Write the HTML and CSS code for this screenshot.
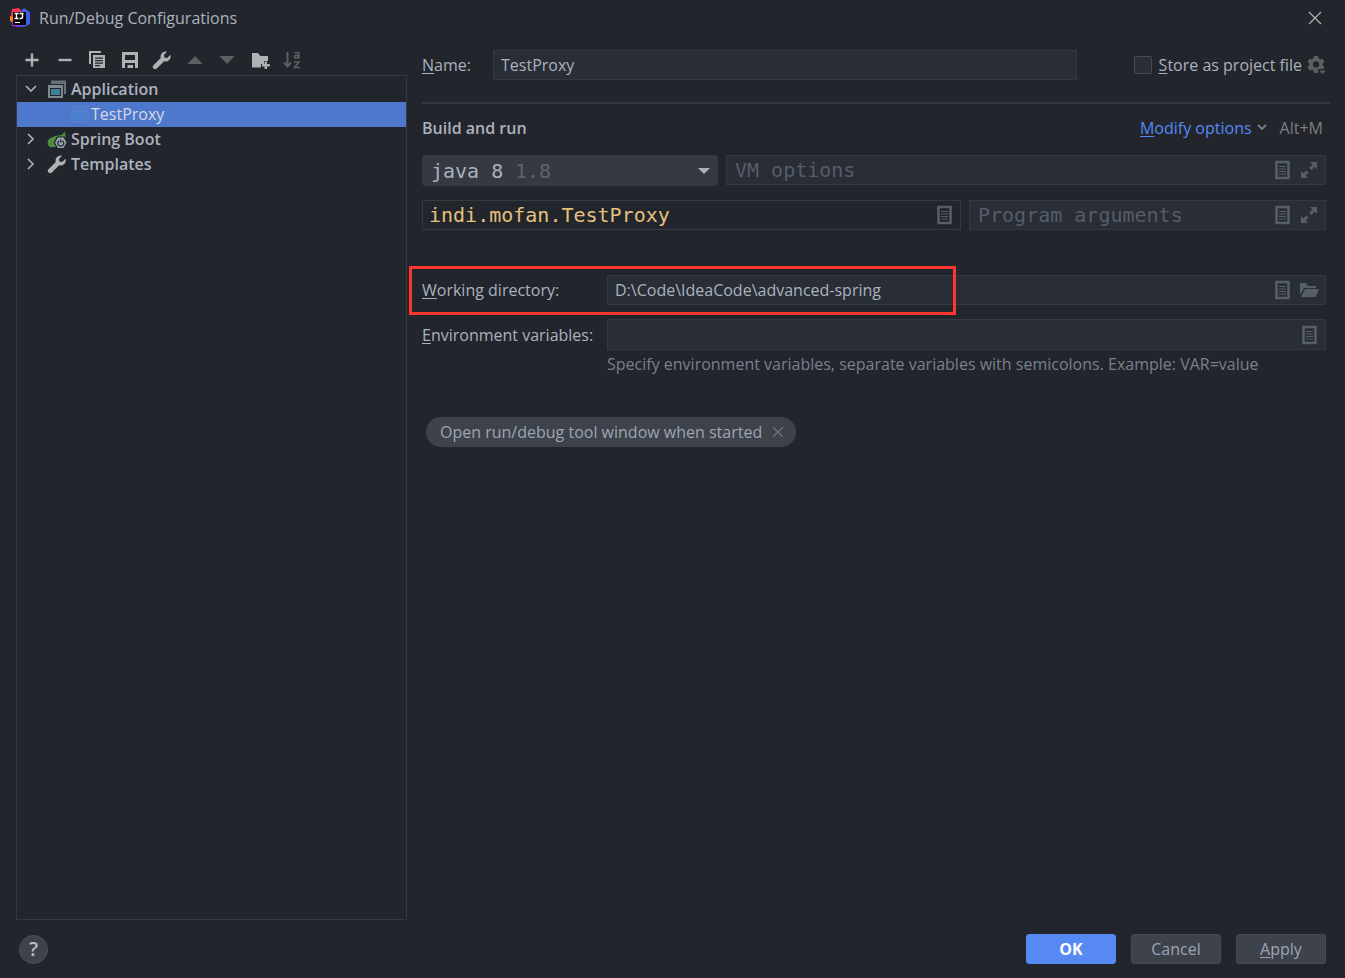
FILE: index.html
```
<!DOCTYPE html>
<html lang="en">
<head>
<meta charset="utf-8">
<title>Run/Debug Configurations</title>
<link rel="stylesheet" href="styles.css">
</head>
<body>
<svg class="defs" aria-hidden="true">
  <symbol id="wrench" viewBox="0 0 20 20"><path d="M18.500 4.800 15.200 8 12.300 7.600 12 5 15 1.700A5.200 5.200 0 0 0 8.700 8L1.500 15.200a2 2 0 0 0 3.300 3.300l7.300-7.200A5.200 5.200 0 0 0 18.500 4.800z" fill="currentColor"/></symbol>
  <symbol id="doc" viewBox="0 0 20 20"><path d="M4.500 2h12v16h-12z" fill="none" stroke="currentColor" stroke-width="2.600"/><path d="M7 6.500h7M7 9h7M7 11.500h7M7 14h7" stroke="currentColor" stroke-width="1.200"/></symbol>
  <symbol id="expand" viewBox="0 0 20 20"><path d="M11 2h7v7l-2.300-2.300-3.200 3.200-2.200-2.200L13.400 4.400zM2 11v7h7l-2.400-2.400 3-3-2.200-2.200-3.100 3z" fill="currentColor"/></symbol>
  <symbol id="app" viewBox="0 0 20 20"><path d="M4 1.500h15V15h-2V5H4z" fill="currentColor" opacity=".75"/><path d="M1 6h15v13H1zM3 9v8h11V9z" fill="currentColor" fill-rule="evenodd"/><path d="M4 10h9v6H4z"/></symbol>
  <symbol id="chevron" viewBox="0 0 12 12"><path d="M3 1 8 6 3 11" fill="none" stroke="currentColor" stroke-width="1.600"/></symbol>
</svg>

<div class="dialog">
  <header class="titlebar">
    <svg class="logo" viewBox="0 0 20 20" aria-hidden="true">
      <path d="M2 1 9 0l3 4-4 9H0z" fill="#fe315d"/>
      <path d="M0 8l4 1 1 7-5-3z" fill="#fc801d"/>
      <path d="M2 13h7l5 5-4 1-8-1z" fill="#a22ee0"/>
      <path d="M11 3 14 0l6 4v12l-6 3-6-2z" fill="#3b62e8"/>
      <path d="M3 4h13v13H3z" fill="#050505"/>
      <path d="M4.500 5.500h4M6.500 5.500v5M4.500 10.500h4M9.500 5.500h4M12.500 5.500v3.500q0 1.500-2 1.500H9.500" fill="none" stroke="#fff" stroke-width="1.400"/>
      <path d="M5 14.500h5" stroke="#fff" stroke-width="1"/>
    </svg>
    <h1 class="title">Run/Debug Configurations</h1>
    <button class="icon-btn close" aria-label="Close"><svg viewBox="0 0 20 20"><path d="M4 4l12 12M16 4 4 16" stroke="currentColor" stroke-width="1.200"/></svg></button>
  </header>

  <main class="content">
    <aside class="sidebar">
      <div class="toolbar">
        <button class="icon-btn" aria-label="Add"><svg viewBox="0 0 20 20"><path d="M10 3.500v13M3.500 10h13" stroke="currentColor" stroke-width="2.400"/></svg></button>
        <button class="icon-btn" aria-label="Remove"><svg viewBox="0 0 20 20"><path d="M3.500 10h13" stroke="currentColor" stroke-width="2.400"/></svg></button>
        <button class="icon-btn" aria-label="Copy"><svg viewBox="0 0 20 20"><path d="M2 14V1h12v2H4v11z" fill="currentColor"/><path d="M6 5h12v13H6zM8 7.500v1.200h8V7.500zM8 10v1.200h8V10zM8 12.500v1.200h8v-1.200zM8 15v1.200h5V15z" fill="currentColor" fill-rule="evenodd"/></svg></button>
        <button class="icon-btn" aria-label="Save"><svg viewBox="0 0 20 20"><path d="M2 2h16v16H2zM5 5v5h10V5zM5 13v5h10v-5z" fill="currentColor" fill-rule="evenodd"/><path d="M7.500 15H13v3H7.500z" fill="currentColor"/></svg></button>
        <button class="icon-btn" aria-label="Edit templates"><svg><use href="#wrench"/></svg></button>
        <button class="icon-btn off" aria-label="Move up" disabled><svg viewBox="0 0 20 20"><path d="M10 6l7.500 8h-15z" fill="currentColor"/></svg></button>
        <button class="icon-btn off" aria-label="Move down" disabled><svg viewBox="0 0 20 20"><path d="M10 14 2.500 6h15z" fill="currentColor"/></svg></button>
        <button class="icon-btn" aria-label="New folder"><svg viewBox="0 0 20 20"><path d="M2 3h6l2.500 3H18v5h-4v3h-3v3.500H2z" fill="currentColor"/><path d="M15.800 11.500v7.500M12 15.200h7.800" stroke="currentColor" stroke-width="2.400"/></svg></button>
        <button class="icon-btn off" aria-label="Sort alphabetically" disabled><svg viewBox="0 0 20 20"><path d="M5.500 2v14M2 12.500l3.500 4 3.500-4" fill="none" stroke="currentColor" stroke-width="2"/><path d="M12.500 3q5-1.500 4.500 1.500v4M17 5.500q-4.500-.5-4.500 1.200 0 1.800 2.500 1.300l2-1M12 12h5l-4.500 5.500H18" fill="none" stroke="currentColor" stroke-width="1.600"/></svg></button>
      </div>
      <ul class="tree" role="tree">
        <li class="node" role="treeitem"><svg class="arrow open"><use href="#chevron"/></svg><svg class="node-icon app"><use href="#app"/></svg>Application</li>
        <li class="node child" role="treeitem" aria-selected="true"><svg class="node-icon app faded"><use href="#app"/></svg>TestProxy</li>
        <li class="node" role="treeitem"><svg class="arrow"><use href="#chevron"/></svg><svg class="node-icon" viewBox="0 0 20 20"><path d="M1 16C-1 9 7 7 12 6.500q4-.5 5.500-4Q20 8 17 12.500 12 19 3 18z" fill="#4f8f3c"/><path d="M10 7.500h7.500l3 6-3.500 6h-7l-3.500-6z" fill="#22252c"/><path d="M11 8.500h5.500l3 5-3 5.500H11l-3-5.500z" fill="#9aa7b0"/><path d="M12 11.700a3 3 0 1 0 3.600 0M13.800 10.300v3.400" fill="none" stroke="#22252c" stroke-width="1.300"/></svg>Spring Boot</li>
        <li class="node" role="treeitem"><svg class="arrow"><use href="#chevron"/></svg><svg class="node-icon"><use href="#wrench"/></svg>Templates</li>
      </ul>
    </aside>

    <form class="form">
      <div class="name-row">
        <label class="name-label" for="name"><u>N</u>ame:</label>
        <div class="field name-field"><input id="name" value="TestProxy"></div>
        <div class="store">
          <input type="checkbox" id="store" class="check"><label for="store"><u>S</u>tore as project file</label>
          <button type="button" class="icon-btn dim" aria-label="Storage options"><svg viewBox="0 0 20 20"><path d="M8 1h4l.6 2.300 1.500.9 2.300-.7 2 3.300-1.700 1.700v1.800l1.700 1.700-2 3.400-2.300-.7-1.500.8L12 18H8l-.6-2.500-1.500-.8-2.300.7-2-3.400 1.700-1.700V8.500L1.600 6.800l2-3.300 2.300.7 1.500-.9zM10 6.300a3.100 3.100 0 1 0 0 6.200 3.100 3.100 0 0 0 0-6.200z" fill="currentColor" fill-rule="evenodd"/><path d="M12 14h8v2l-4 4-4-4z" fill="#22252c"/><path d="M13 15.500h7L16.500 19z" fill="currentColor"/></svg></button>
        </div>
      </div>
      <hr class="rule">
      <div class="section-head">
        <h2 class="section-title">Build and run</h2>
        <button type="button" class="modify"><span class="link"><u>M</u>odify options</span><svg class="mini" viewBox="0 0 12 12"><path d="M2 3l4 4 4-4" fill="none" stroke="currentColor" stroke-width="1.800"/></svg></button>
        <span class="shortcut">Alt+M</span>
      </div>
      <div class="row first">
        <div class="combo">
          <select aria-label="Java runtime"><option>java 8</option></select>
          <span class="version">1.8</span>
          <svg class="caret" viewBox="0 0 12 6"><path d="M0 0h12L6 6z" fill="currentColor"/></svg>
        </div>
        <div class="field mono grow">
          <input aria-label="VM options" placeholder="VM options">
          <button type="button" class="icon-btn" aria-label="Insert macro"><svg><use href="#doc"/></svg></button>
          <button type="button" class="icon-btn" aria-label="Expand"><svg><use href="#expand"/></svg></button>
        </div>
      </div>
      <div class="row">
        <div class="field mono main-class">
          <input aria-label="Main class" value="indi.mofan.TestProxy">
          <button type="button" class="icon-btn" aria-label="Insert macro"><svg><use href="#doc"/></svg></button>
        </div>
        <div class="field mono program-args">
          <input aria-label="Program arguments" placeholder="Program arguments">
          <button type="button" class="icon-btn" aria-label="Insert macro"><svg><use href="#doc"/></svg></button>
          <button type="button" class="icon-btn" aria-label="Expand"><svg><use href="#expand"/></svg></button>
        </div>
      </div>
      <div class="row labelled workdir">
        <label for="dir"><u>W</u>orking directory:</label>
        <div class="field grow">
          <input id="dir" value="D:\Code\IdeaCode\advanced-spring">
          <button type="button" class="icon-btn" aria-label="Insert macro"><svg><use href="#doc"/></svg></button>
          <button type="button" class="icon-btn" aria-label="Browse"><svg viewBox="0 0 20 20"><path d="M1 3h6l2 3h8v2H5L1 15z" fill="currentColor"/><path d="M6 9h14l-3.500 8H2z" fill="currentColor"/></svg></button>
        </div>
        <span class="highlight"></span>
      </div>
      <div class="row labelled">
        <label for="env"><u>E</u>nvironment variables:</label>
        <div class="field grow env-field">
          <input id="env">
          <button type="button" class="icon-btn" aria-label="Edit variables"><svg><use href="#doc"/></svg></button>
        </div>
      </div>
      <p class="hint">Specify environment variables, separate variables with semicolons. Example: VAR=value</p>
      <div class="chip">Open run/debug tool window when started
        <button type="button" class="chip-close" aria-label="Remove option"><svg viewBox="0 0 10 10"><path d="M0 0l10 10M10 0 0 10" stroke="currentColor" stroke-width="1.400"/></svg></button>
      </div>
    </form>
  </main>

  <footer class="footer">
    <button class="help" aria-label="Help">?</button>
    <button class="btn primary">OK</button>
    <button class="btn">Cancel</button>
    <button class="btn"><u>A</u>pply</button>
  </footer>
</div>
</body>
</html>
```
FILE: styles.css
```
:root {
  --bg: #22252c;
  --field: #292d35;
  --line: #343840;
  --text: #abb2bf;
  --muted: #7a808c;
  --icon: #afb1b3;
}
* { box-sizing: border-box; }
body {
  margin: 0;
  background: var(--bg);
  color: var(--text);
  font: 16px/20px "Open Sans", "Noto Sans", sans-serif;
}
button, input, select { font: inherit; color: inherit; }
u { text-underline-offset: 2px; }
.defs { display: none; }
.dialog { display: flex; flex-direction: column; min-height: 100vh; }

.titlebar { display: flex; align-items: center; gap: 9px; height: 36px; padding: 0 20px 0 10px; }
.logo { width: 20px; height: 20px; }
.title { flex: 1; margin: 0; font-size: 16px; font-weight: 400; }
.icon-btn {
  display: flex; flex: none; align-items: center; justify-content: center;
  width: 20px; height: 20px; padding: 0; border: 0; background: none; color: var(--icon);
}
.icon-btn svg { width: 20px; height: 20px; }
.icon-btn.off, .icon-btn.dim { color: #5c5e60; }

.content { display: flex; flex: 1; gap: 15px; padding: 0 15px 0 16px; }
.sidebar { display: flex; flex-direction: column; width: 391px; padding-top: 14px; }
.toolbar { display: flex; justify-content: space-between; width: 280px; margin: 0 0 5px 6px; }
.tree { flex: 1; margin: 0; padding: 1px 0; border: 1px solid var(--line); list-style: none; }
.node { display: flex; align-items: center; height: 25px; padding: 0 0 2px 8px; font-weight: 600; }
.child { padding-left: 53px; background: #4d78cc; color: #d7dae0; font-weight: 400; }
.arrow { width: 12px; height: 12px; margin-right: 10px; }
.arrow.open { transform: rotate(90deg); }
.node-icon { width: 20px; height: 20px; margin-right: 4px; color: var(--icon); }
.app { color: #7f8b91; fill: #3a8199; }
.faded { margin-right: 1px; color: #5b83cc; fill: #4687d6; opacity: .7; }

.form { flex: 1; min-width: 0; padding-top: 14px; }
.name-row { display: flex; align-items: center; height: 30px; padding-right: 4px; }
.name-label { width: 71px; }
.name-field { flex: 1; }
.store { display: flex; align-items: center; margin-left: 57px; }
.check {
  appearance: none; width: 18px; height: 18px; margin: 0 7px 0 0;
  border: 1px solid #454a54; border-radius: 2px; background: var(--field);
}
.store .icon-btn { margin-left: 4px; }
.field {
  display: flex; align-items: center; gap: 7px; height: 30px; min-width: 0;
  padding: 0 6px 0 7px; border: 1px solid var(--line); background: var(--field);
}
.field input { flex: 1; min-width: 0; height: 28px; padding: 0; border: 0; background: none; outline: 0; }
.field .icon-btn { color: #565e66; }
.mono { padding-left: 8px; font: 20px/28px "DejaVu Sans Mono", "Liberation Mono", monospace; }
.mono input::placeholder { color: #565c69; opacity: 1; }
.rule { height: 2px; margin: 22px 0 14px; border: 0; background: var(--line); }
.section-head { display: flex; align-items: center; height: 20px; margin-bottom: 17px; padding-right: 7px; }
.section-title { flex: 1; margin: 0; font-size: 16px; font-weight: 600; }
.modify { display: flex; align-items: center; gap: 4px; padding: 0; border: 0; background: none; }
.link { color: #548af7; }
.mini { width: 12px; height: 12px; color: var(--muted); }
.shortcut { margin-left: 12px; color: #7d7e80; }
.row { display: flex; gap: 8px; margin-bottom: 14px; padding-right: 4px; }
.grow { flex: 1; }
.combo {
  display: grid; width: 296px; height: 31px; align-items: center;
  border-radius: 4px; background: #353941; font: 20px/28px "DejaVu Sans Mono", monospace;
}
.combo > * { grid-area: 1 / 1; }
.combo select {
  appearance: none; width: 100%; height: 31px; padding: 0 9px;
  border: 0; background: none; outline: 0;
}
.version { margin-left: 93px; color: #5c6370; pointer-events: none; }
.caret { justify-self: end; width: 12px; height: 6px; margin-right: 8px; pointer-events: none; }
.main-class { flex: 1; padding-left: 6px; background: var(--bg); color: #e5c07b; }
.program-args { width: 40%; max-width: 357px; }
.labelled { gap: 0; align-items: center; }
.labelled label { width: 185px; }
.workdir { position: relative; margin-top: 45px; }
.highlight {
  position: absolute; top: -9px; left: -13px; width: 547px; height: 49px;
  border: 3px solid #ff3530; pointer-events: none;
}
.env-field { height: 31px; }
.hint { margin: -10px 0 43px 185px; color: var(--muted); }
.chip {
  display: inline-flex; align-items: center; gap: 11px; height: 30px; margin-left: 4px;
  padding: 0 13px 0 14px; border-radius: 15px; background: #3d424b; color: #9da5b4;
}
.chip-close { display: flex; padding: 0; border: 0; background: none; color: #6c737e; }
.chip-close svg { width: 10px; height: 10px; }

.footer { display: flex; align-items: center; gap: 15px; padding: 14px 19px; }
.help {
  width: 29px; height: 29px; margin-right: auto; padding: 0; border: 1px solid #4a4f59;
  border-radius: 50%; background: #3d424b; color: #bbbdc0; font-size: 20px; font-weight: 600;
}
.btn { width: 90px; height: 30px; padding: 0; border: 1px solid #464c56; border-radius: 3px; background: #3d424b; color: #9da5b4; }
.primary { border-color: #568af2; background: #568af2; color: #fff; font-weight: 700; }
```
